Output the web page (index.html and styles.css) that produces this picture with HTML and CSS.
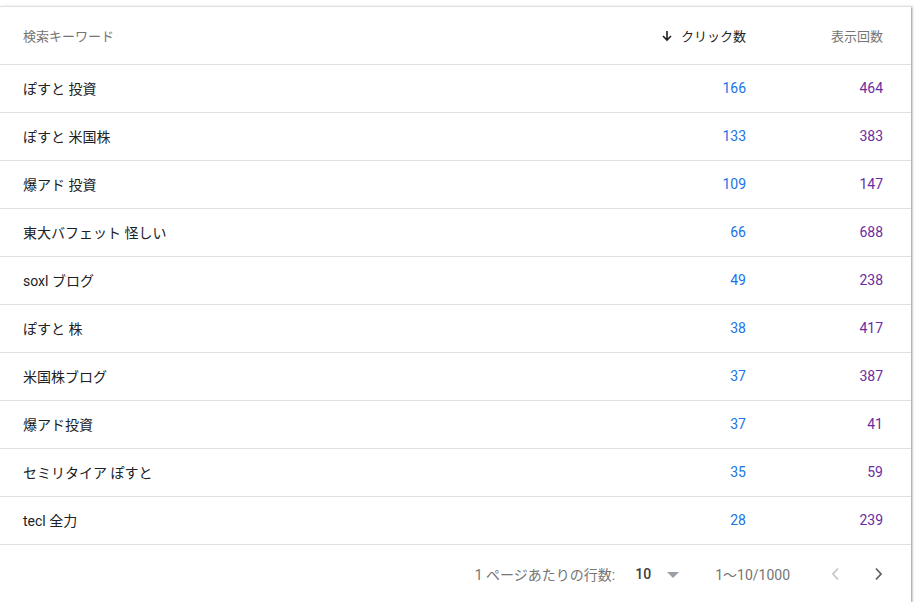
FILE: index.html
```html
<!DOCTYPE html>
<html lang="ja">
<head>
<meta charset="utf-8">
<link rel="stylesheet" href="styles.css">
</head>
<body>
<div class="card">
  <div class="row head">
    <div class="kw">検索キーワード</div>
    <div class="num sorted"><svg class="arrow" width="12" height="12" viewBox="0 0 12 12"><path d="M6 1v9M2 6l4 4 4-4" fill="none" stroke="#202124" stroke-width="1.6"/></svg>クリック数</div>
    <div class="num">表示回数</div>
  </div>
  <div class="row"><div class="kw">ぽすと 投資</div><div class="num c">166</div><div class="num i">464</div></div>
  <div class="row"><div class="kw">ぽすと 米国株</div><div class="num c">133</div><div class="num i">383</div></div>
  <div class="row"><div class="kw">爆アド 投資</div><div class="num c">109</div><div class="num i">147</div></div>
  <div class="row"><div class="kw">東大バフェット 怪しい</div><div class="num c">66</div><div class="num i">688</div></div>
  <div class="row"><div class="kw">soxl ブログ</div><div class="num c">49</div><div class="num i">238</div></div>
  <div class="row"><div class="kw">ぽすと 株</div><div class="num c">38</div><div class="num i">417</div></div>
  <div class="row"><div class="kw">米国株ブログ</div><div class="num c">37</div><div class="num i">387</div></div>
  <div class="row"><div class="kw">爆アド投資</div><div class="num c">37</div><div class="num i">41</div></div>
  <div class="row"><div class="kw">セミリタイア ぽすと</div><div class="num c">35</div><div class="num i">59</div></div>
  <div class="row"><div class="kw">tecl 全力</div><div class="num c">28</div><div class="num i">239</div></div>
  <div class="footer">
    <span class="label">1 ページあたりの行数:</span>
    <span class="per">10</span>
    <svg class="drop" width="12" height="6" viewBox="0 0 12 6"><path d="M0 0h12L6 6z" fill="#9aa0a6"/></svg>
    <span class="range">1〜10/1000</span>
    <svg class="chev prev" width="10" height="14" viewBox="0 0 10 14"><path d="M8 1.5L3 7l5 5.5" fill="none" stroke="#c4c7ca" stroke-width="1.8"/></svg>
    <svg class="chev next" width="10" height="14" viewBox="0 0 10 14"><path d="M2 1.5L7 7l-5 5.5" fill="none" stroke="#5f6368" stroke-width="1.8"/></svg>
  </div>
</div>
</body>
</html>
```
FILE: styles.css
```css
html, body {
  margin: 0;
  padding: 0;
  background: #fff;
}
body {
  font-family: Roboto, "Noto Sans CJK JP", sans-serif;
  color: #202124;
  font-size: 14px;
}
.card {
  width: 911px;
  margin-top: 6px;
  border-top: 1px solid #e0e0e0;
  background: #fff;
  box-shadow: 1px 1px 2px rgba(0,0,0,0.35), 2px 0 3px rgba(0,0,0,0.08);
}
.row {
  display: grid;
  grid-template-columns: 1fr 160px 137px;
  align-items: center;
  height: 47px;
  box-sizing: border-box;
  height: 48px;
  border-bottom: 1px solid #e0e0e0;
  padding: 0 28px 2px 23px;
}
.row.head {
  height: 58px;
  padding-bottom: 0;
  font-size: 13px;
  color: #757575;
}
.num {
  text-align: right;
}
.sorted {
  color: #202124;
  display: flex;
  justify-content: flex-end;
  align-items: center;
  gap: 8px;
}
.arrow { display: block; }
.c { color: #1a73e8; }
.i { color: #6a2ca0; }
.footer {
  height: 57px;
  display: flex;
  align-items: center;
  justify-content: flex-end;
  padding-right: 27px;
  color: #757575;
  font-size: 14px;
}
.per {
  color: #3c4043;
  margin-left: 20px;
  font-weight: 500;
}
.drop {
  margin-left: 16px;
  margin-top: 3px;
}
.range {
  margin-left: 36px;
}
.chev.prev { margin-left: 40px; }
.chev.next { margin-left: 34px; }
```
